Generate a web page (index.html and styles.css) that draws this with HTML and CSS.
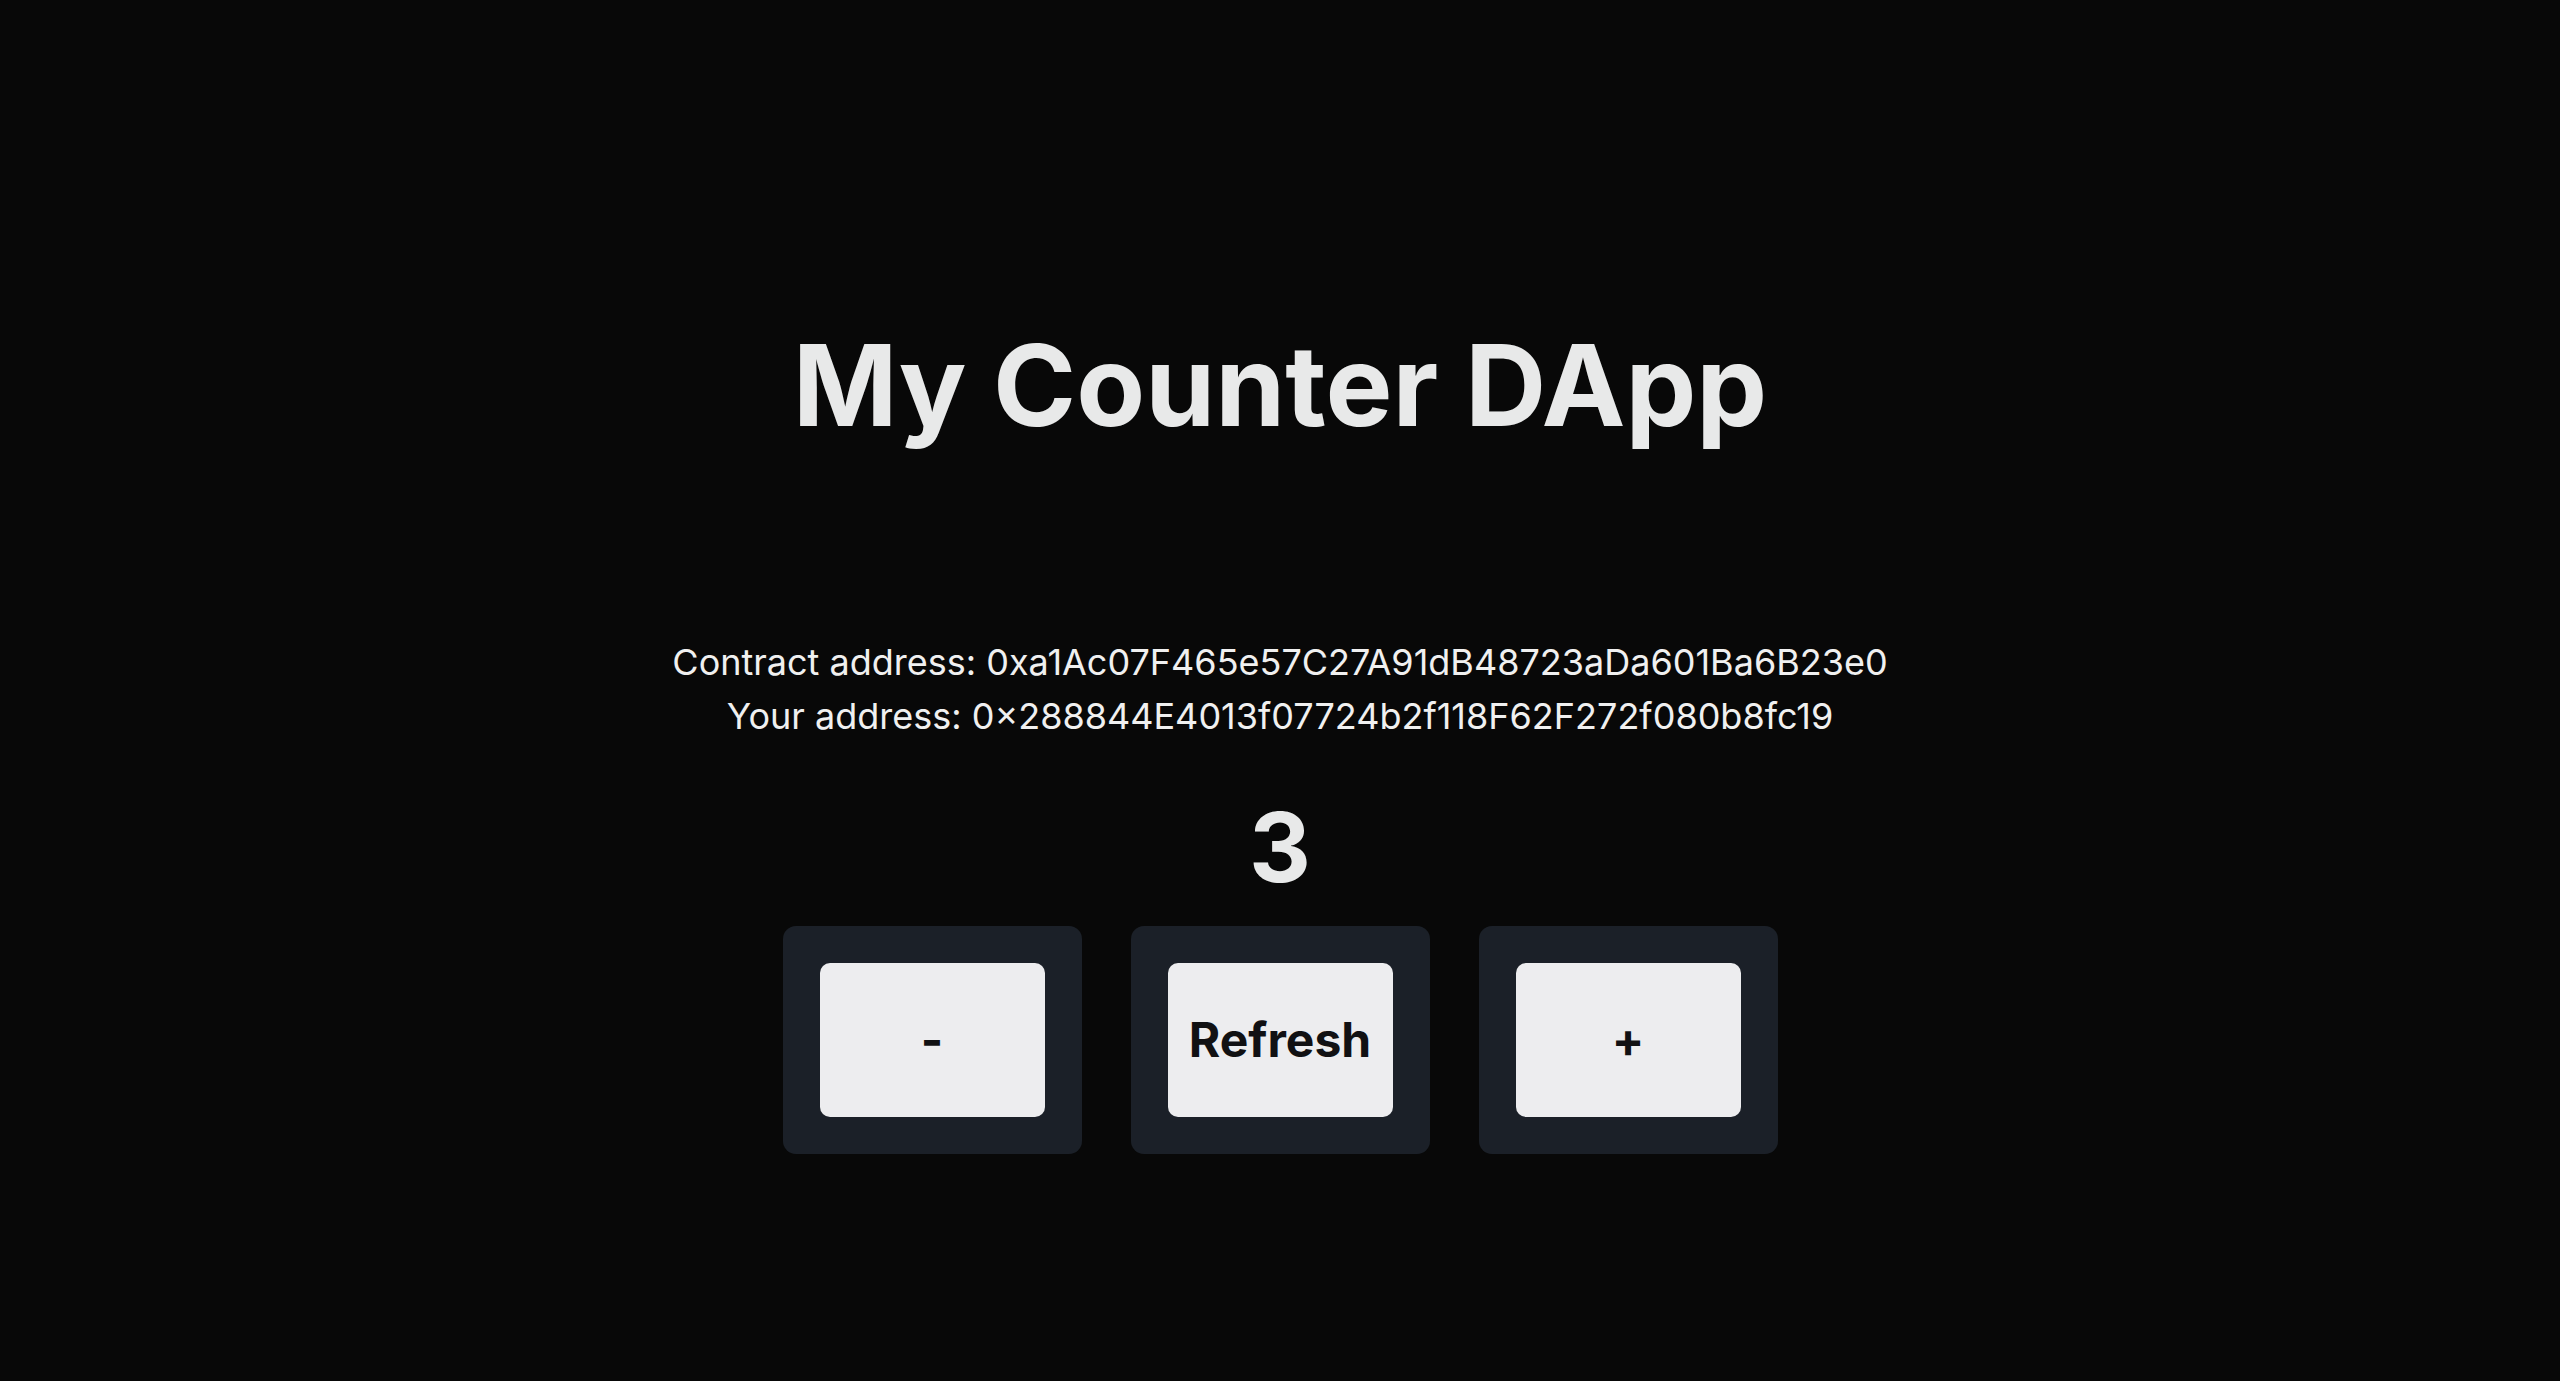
FILE: index.html
```html
<!DOCTYPE html>
<html lang="en">
<head>
<meta charset="utf-8">
<title>My Counter DApp</title>
<link rel="stylesheet" href="styles.css">
</head>
<body>
<div class="app">
  <h1 class="title">My Counter DApp</h1>
  <div class="addresses">
    <div class="line">Contract address: 0xa1Ac07F465e57C27A91dB48723aDa601Ba6B23e0</div>
    <div class="line">Your address: 0×288844E4013f07724b2f118F62F272f080b8fc19</div>
  </div>
  <div class="count">3</div>
  <div class="controls">
    <div class="card"><button class="btn">-</button></div>
    <div class="card"><button class="btn">Refresh</button></div>
    <div class="card"><button class="btn">+</button></div>
  </div>
</div>
</body>
</html>
```
FILE: styles.css
```css
html, body {
  margin: 0;
  padding: 0;
}
body {
  background: #080808;
  color: #ebebeb;
  font-family: Inter, "Noto Sans", "Liberation Sans", sans-serif;
  font-size: 36px;
  line-height: 1.5;
}
.app {
  display: flex;
  flex-direction: column;
  align-items: center;
  padding-top: 324px;
}
.title {
  margin: 0 0 187px;
  font-size: 112.5px;
  line-height: 1.1;
  font-weight: 700;
  color: #e8e9e9;
}
.addresses {
  text-align: center;
  color: #f0f0f0;
}
.line {
  height: 54px;
}
.count {
  margin-top: 56px;
  font-size: 96px;
  line-height: 1;
  font-weight: 700;
  color: #e8e9e9;
}
.controls {
  display: flex;
  gap: 49px;
  margin-top: 31px;
}
.card {
  background: #1b2028;
  border-radius: 13px;
  padding: 37px;
  display: flex;
}
.btn {
  width: 225px;
  height: 154px;
  border: none;
  border-radius: 10px;
  background: #ededef;
  color: #111113;
  font-family: Inter, "Noto Sans", "Liberation Sans", sans-serif;
  font-size: 48px;
  font-weight: 700;
  padding: 0;
  cursor: pointer;
}
```
